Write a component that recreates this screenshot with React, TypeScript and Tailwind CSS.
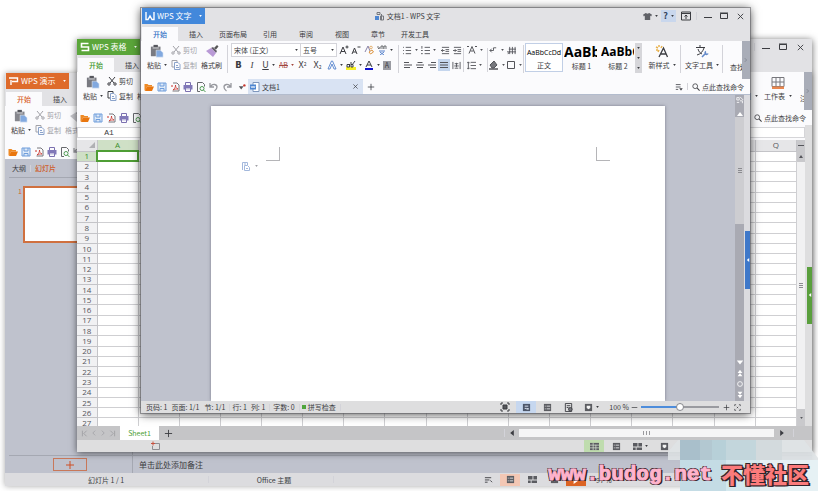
import type { ReactNode } from 'react';

const COLUMNS = 'ABCDEFGHIJKLMNOPQ'.split('');
const ROWS = Array.from({ length: 27 }, (_, i) => i + 1);
const TABS = ['插入', '页面布局', '引用', '审阅', '视图', '章节', '开发工具'];

type Box = { children: ReactNode; className?: string };

/* ---------- small shared pieces ---------- */

function Svg({ children, className = 'size-[10px]', box = 10 }: Box & { box?: number }) {
  return (
    <svg viewBox={`0 0 ${box} ${box}`} className={`${className} shrink-0`} fill="none" stroke="currentColor" strokeWidth="1" aria-hidden="true">
      {children}
    </svg>
  );
}

function Caret() {
  return (
    <svg viewBox="0 0 4 3" className="w-[3px] h-[2px] shrink-0" fill="currentColor" aria-hidden="true">
      <path d="M0 0h4L2 3z" />
    </svg>
  );
}

function Sep({ className = 'h-3' }: { className?: string }) {
  return <span className={`w-px shrink-0 bg-[#d3d3d9] ${className}`} />;
}

function Tool({ label, className = 'w-3', caret, children }: Box & { label: string; caret?: boolean }) {
  return (
    <button type="button" aria-label={label} className={`flex h-[12px] shrink-0 items-center justify-center gap-[3px] ${className}`}>
      {children}
      {caret && <Caret />}
    </button>
  );
}

/* ---------- icons ---------- */

const PasteIcon = ({ faded }: { faded?: boolean }) => (
  <Svg className="h-[14px] w-[16px]" box={16}>
    <path d="M1 3h11v11H1z" fill={faded ? '#85868d' : '#797a81'} stroke="none" />
    <path d="M4 1h5v3H4z" fill="#55565d" stroke="none" />
    <path d="M3 4.500h7" stroke="#e8e8ea" />
    <path d="M7 7h5l3 3v5H7z" fill="#82a9df" stroke="#f4f6fa" strokeWidth=".6" />
  </Svg>
);

const CutIcon = () => (
  <Svg>
    <path d="M2 1l5 6M8 1L3 7" />
    <circle cx="2" cy="8" r="1.2" />
    <circle cx="8" cy="8" r="1.2" />
  </Svg>
);

const CopyIcon = () => (
  <Svg>
    <path d="M6 2V.5H1V7h2" />
    <path d="M3.500 2.500h3.500l2 2v5H3.500zM5 5.500h2M5 7.500h3" stroke="#8ba3cb" />
  </Svg>
);

const BrushIcon = ({ faded }: { faded?: boolean }) => (
  <Svg className="size-[14px]" box={14}>
    <path d="M9 4l3-3 1.500 1.500L11 5.500z" fill={faded ? '#b5b5ba' : '#555'} stroke="none" />
    <path d="M6 4l2-1 4 4-1 2z" fill={faded ? '#a9a9ae' : '#66616d'} stroke="none" />
    <path d="M1 7l5-3 5 5-3 4z" fill={faded ? '#c3c3c8' : '#b99ad6'} stroke="none" />
  </Svg>
);

const FolderIcon = () => (
  <Svg>
    <path d="M.5 8.500V2h3l1 1h3.500v1.500H3L1.500 8.500z" fill="#ee8a24" stroke="none" />
    <path d="M3 4.500h7L8 9H1z" fill="#e9760f" stroke="none" />
  </Svg>
);

const SaveIcon = () => (
  <Svg>
    <path d="M1 1h8v8H1z" stroke="#6f9ddb" fill="#dfeaf8" />
    <path d="M3 1v3h4V1M3 9V6.500h4V9" stroke="#6f9ddb" />
  </Svg>
);

const PdfIcon = () => (
  <Svg>
    <path d="M3 1h4l2 2v6H2.500" stroke="#77777c" />
    <path d="M1 4h2" stroke="#c8342c" />
    <path d="M3 8c2-1.500 2.500-3.500 2.500-5 0 2 1 3.500 2.500 4-2 0-3.500 0-5 1z" stroke="#c8342c" strokeWidth=".8" />
  </Svg>
);

const PrintIcon = () => (
  <Svg>
    <path d="M2.500 3.500v-3h5v3M2.500 6.500v3h5v-3" stroke="#7b70b0" />
    <path d="M.5 3h9v4.500h-9z" fill="#8178b8" stroke="none" />
    <path d="M3 7h4" stroke="#fff" />
  </Svg>
);

const PreviewIcon = () => (
  <Svg>
    <path d="M4 9.500H1.500v-9h5l2 2v2" stroke="#67696d" />
    <circle cx="6" cy="6.500" r="2" stroke="#4f9a54" />
    <path d="M7.500 8l2 2" stroke="#4f9a54" />
  </Svg>
);

const UndoIcon = ({ flip }: { flip?: boolean }) => (
  <Svg>
    <path d={flip ? 'M9 1v4H5M8.500 4.500C6 1 2 2.500 2 5c0 2 1 3 2.500 4' : 'M1 1v4h4M1.500 4.500C4 1 8 2.500 8 5c0 2-1 3-2.500 4'} stroke="#97989e" strokeWidth="1.300" />
  </Svg>
);

const SearchIcon = () => (
  <Svg className="size-[8px]">
    <circle cx="4" cy="4" r="3" />
    <path d="M6.500 6.500L9.500 9.500" strokeWidth="1.300" />
  </Svg>
);

const Lines = ({ d, className }: { d: string; className?: string }) => (
  <Svg className={className}>
    <path d={d} />
  </Svg>
);

const PageViewIcon = () => (
  <Svg className="size-[9px]">
    <path d="M1 1h8v8H1z" fill="#5b5c61" stroke="none" />
    <path d="M3 3h4v2.500L5 7 3 5.500z" fill="#f2f2f2" stroke="none" />
  </Svg>
);

const PageIcon = () => (
  <Svg className="size-[9px]">
    <path d="M1 1h8v8H1z" fill="#4c566a" stroke="none" />
    <path d="M3 3.500h4M3 6h2" stroke="#e6eefa" />
    <path d="M5 6.500h2.500" stroke="#e6eefa" strokeWidth="1.500" />
  </Svg>
);

const OutlineIcon = () => (
  <Svg className="size-[9px]">
    <path d="M1 1h8v8H1z" fill="#5b5c61" stroke="none" />
    <path d="M2 3.500h1M4 3.500h4M2 6.500h1M4 6.500h4" stroke="#e2e2e4" />
  </Svg>
);

const GridIcon = () => (
  <Svg className="size-[9px]">
    <path d="M0 1h10v8H0z" fill="#5b5c61" stroke="none" />
    <path d="M0 3.500h10M0 6.500h10M3.500 1v8M6.500 3v6" stroke="#d8e4d2" strokeWidth=".8" />
  </Svg>
);

const ThumbsIcon = () => (
  <Svg className="size-[9px]">
    <path d="M0 1h5v4H0zM6 1h4v4H6zM0 6h3v3H0zM4 6h6v3H4z" fill="#5b5c61" stroke="none" />
  </Svg>
);

/* ---------- window parts ---------- */

function Brand({ name, className, children }: Box & { name: string }) {
  return (
    <button type="button" className={`flex h-4 w-[63px] shrink-0 items-center gap-[2px] pl-[3px] text-[8px] text-white ${className}`}>
      {children}
      <span className="grow text-left whitespace-nowrap">{name}</span>
      <span className="pr-[3px]"><Caret /></span>
    </button>
  );
}

function WindowButtons() {
  return (
    <>
      <Tool label="最小化"><Lines d="M1 6.500h8" /></Tool>
      <Tool label="最大化"><Lines d="M1.500 2.500h7v5h-7zM1 2h8" /></Tool>
      <Tool label="关闭"><Lines d="M2 2l6 6M8 2L2 8" className="size-[9px]" /></Tool>
    </>
  );
}

function RibbonTabs({ tabs, accent }: { tabs: string[]; accent: string }) {
  return (
    <nav className="flex h-[17px] shrink-0 items-end overflow-hidden pl-px">
      <button type="button" className={`h-[14px] w-9 shrink-0 bg-[#fbfbfd] font-medium ${accent}`}>开始</button>
      {tabs.map((tab) => (
        <button key={tab} type="button" className="h-[14px] min-w-9 shrink-0 px-[5px]">{tab}</button>
      ))}
    </nav>
  );
}

function Clipboard({ cutOff, brushOff }: { cutOff?: boolean; brushOff?: boolean }) {
  return (
    <div className="flex shrink-0 pl-[5px] pt-[3px]">
      <button type="button" className="flex w-[22px] flex-col items-center gap-px">
        <PasteIcon faded={brushOff} />
        <span className="flex items-center gap-[3px] whitespace-nowrap leading-[12px]">粘贴<Caret /></span>
      </button>
      <div className={`ml-[3px] flex w-7 flex-col gap-[3px] ${cutOff ? 'text-[#a2a2a8]' : ''}`}>
        <button type="button" className="flex h-[12px] items-center gap-[2px] whitespace-nowrap"><CutIcon />剪切</button>
        <button type="button" className="flex h-[12px] items-center gap-[2px] whitespace-nowrap"><CopyIcon />复制</button>
      </div>
      <button type="button" className={`flex w-[25px] flex-col items-center gap-px ${brushOff ? 'text-[#a2a2a8]' : ''}`}>
        <BrushIcon faded={brushOff} />
        <span className="whitespace-nowrap leading-[12px]">格式刷</span>
      </button>
    </div>
  );
}

function QuickAccess() {
  return (
    <div className="flex shrink-0 items-center gap-[3px] pl-[3px]">
      <button type="button" aria-label="打开"><FolderIcon /></button>
      <button type="button" aria-label="保存"><SaveIcon /></button>
      <button type="button" aria-label="输出为PDF"><PdfIcon /></button>
      <button type="button" aria-label="打印"><PrintIcon /></button>
      <button type="button" aria-label="打印预览"><PreviewIcon /></button>
      <button type="button" aria-label="撤销"><UndoIcon /></button>
      <button type="button" aria-label="恢复"><UndoIcon flip /></button>
    </div>
  );
}

function FindCommand() {
  return (
    <button type="button" className="flex items-center gap-[2px] whitespace-nowrap">
      <SearchIcon />
      点此查找命令
    </button>
  );
}

function RibbonScroll() {
  return (
    <button type="button" aria-label="更多" className="flex h-full w-2 shrink-0 items-center justify-center bg-[#a9adb8] text-[#6f737f]">
      <Lines d="M3 2l3 3-3 3" className="size-[6px]" />
    </button>
  );
}

/* ---------- presentation ---------- */

function PresentationWindow() {
  return (
    <section className="absolute top-[73px] right-[6px] bottom-[5px] left-[5px] flex flex-col overflow-hidden bg-[#e2e2e5] shadow-[0_0_6px_rgba(0,0,0,0.35)]">
      <header className="flex h-4 shrink-0 pl-px">
        <Brand name="WPS 演示" className="bg-[#de6b2b]">
          <Svg><path d="M0 2h8.500v3.500H3M2 4v5" strokeWidth="1.400" /></Svg>
        </Brand>
      </header>
      <RibbonTabs tabs={['插入']} accent="text-[#d9622b]" />
      <div className="flex h-[38px] shrink-0 bg-[#fbfbfd]"><Clipboard cutOff brushOff /></div>
      <div className="flex h-[15px] shrink-0 bg-[#fbfbfd]"><QuickAccess /></div>
      <div className="flex min-h-0 grow bg-[#bfc2cd]">
        <aside className="flex w-32 shrink-0 flex-col border-r border-[#a5a8b2] pl-1">
          <div className="flex h-[19px] shrink-0 items-center gap-1 border-b border-[#a5a8b2] pl-[3px]">
            <button type="button">大纲</button>
            <Sep className="h-[7px]" />
            <button type="button" className="font-medium text-[#cf5b28]">幻灯片</button>
          </div>
          <div className="flex grow items-start pt-2">
            <span className="w-[14px] pr-px text-right text-[#d9622b]">1</span>
            <div className="h-[57px] w-[100px] border-2 border-[#d0703f] bg-white" />
          </div>
          <div className="flex h-[18px] shrink-0 items-center border-t border-[#a5a8b2] pl-[44px]">
            <button type="button" aria-label="新建幻灯片" className="flex h-[13px] w-[34px] items-center justify-center border border-[#c8785a] text-[#cf4f25]">
              <Lines d="M5 1v8M1 5h8" />
            </button>
          </div>
        </aside>
        <div className="flex min-w-0 grow flex-col justify-end">
          <p className="flex h-[18px] items-center border-t border-[#a5a8b2] pl-[6px] text-[8px]">单击此处添加备注</p>
        </div>
      </div>
      <footer className="flex h-[13px] shrink-0 items-center bg-[#dcdcdf]">
        <span className="w-[203px] pl-[83px]">幻灯片 1 / 1</span>
        <Sep className="h-[7px]" />
        <span className="w-[124px] pl-[6px] text-center">Office 主题</span>
        <Sep className="h-[7px]" />
        <div className="ml-[144px] flex items-center gap-[2px]">
          <Tool label="备注" className="w-5"><Lines d="M1 3h7M1 5.500h5M1 8h3M7 6l2 2" className="size-[9px]" /></Tool>
          <Tool label="普通视图" className="w-5 bg-[#f3c7b4]"><OutlineIcon /></Tool>
          <Tool label="浏览视图" className="w-5"><ThumbsIcon /></Tool>
          <Tool label="阅读视图" className="w-5"><PageViewIcon /></Tool>
          <Tool label="放映" className="w-5 bg-[#dc6424] text-white">
            <Svg className="size-[8px]"><path d="M2 0l7 5-7 5z" fill="currentColor" stroke="none" /></Svg>
          </Tool>
          <span className="ml-2">97 %</span>
        </div>
      </footer>
    </section>
  );
}

/* ---------- spreadsheet ---------- */

function Sheet() {
  return (
    <table className="h-[289px] w-full table-fixed border-collapse bg-white text-center font-['Open_Sans','Noto_Sans_CJK_SC',sans-serif] text-[8px] leading-[8px] text-[#55565b]">
      <colgroup>
        <col className="w-5" />
        {COLUMNS.map((c) => <col key={c} />)}
      </colgroup>
      <thead>
        <tr className="h-[11px] bg-[#e6e6e8]">
          <td className="border-r border-b border-[#c4c4c8] p-0">
            <svg viewBox="0 0 6 6" className="mr-[2px] ml-auto size-[6px] fill-[#b0b0b4]" aria-hidden="true"><path d="M6 0v6H0z" /></svg>
          </td>
          {COLUMNS.map((c) => (
            <th key={c} scope="col" className={`border-r border-b border-[#c4c4c8] p-0 font-normal ${c === 'A' ? 'bg-[#cfe0c6] text-[#3c8f2c]' : ''}`}>{c}</th>
          ))}
        </tr>
      </thead>
      <tbody>
        {ROWS.map((row) => (
          <tr key={row}>
            <th scope="row" className={`border-r border-b border-[#c4c4c8] p-0 font-normal ${row === 1 ? 'bg-[#cfe0c6] text-[#3c8f2c]' : 'bg-[#f1f1f3]'}`}>{row}</th>
            {COLUMNS.map((c) => (
              <td key={c} className={`border-r border-b border-[#cfcfd2] p-0 ${row === 1 && c === 'A' ? 'outline-2 -outline-offset-1 outline-[#4f9e35]' : ''}`} />
            ))}
          </tr>
        ))}
      </tbody>
    </table>
  );
}

function SpreadsheetWindow() {
  return (
    <section className="absolute top-[39px] right-[6px] bottom-[39px] left-[77px] flex flex-col overflow-hidden bg-[#e2e2e5] shadow-[0_1px_7px_rgba(0,0,0,0.6)]">
      <header className="flex h-4 shrink-0 items-center justify-between">
        <Brand name="WPS 表格" className="bg-[#5ba63a]">
          <Svg><path d="M8.500 1.500h-7V5h7v3.500h-7" strokeWidth="1.600" /></Svg>
        </Brand>
        <div className="flex items-center gap-[5px] pr-[6px]"><Sep className="h-2" /><WindowButtons /></div>
      </header>
      <RibbonTabs tabs={['插入']} accent="text-[#3f972b]" />
      <div className="flex h-[38px] shrink-0 justify-between bg-[#fbfbfd]">
        <Clipboard />
        <div className="flex">
          <div className="flex flex-col items-center pt-1 pr-[6px]">
            <Svg className="size-[14px]" box={14}><path d="M1 1h12v12H1z" fill="#5a9a48" stroke="none" /><path d="M1 5h12M1 9h12" stroke="#dcebd5" /></Svg>
            <span className="flex items-center gap-1 whitespace-nowrap leading-[12px]">行和列<Caret /></span>
          </div>
          <div className="flex flex-col items-center pt-1 pr-2">
            <Svg className="size-[14px]" box={14}>
              <path d="M1 1.500h12v9H1zM1 6h12M5 1.500v9M9 1.500v9" stroke="#77777c" />
              <path d="M1 10.500h12v2.500H1z" fill="#e8874f" stroke="none" />
            </Svg>
            <span className="flex items-center gap-1 whitespace-nowrap leading-[12px]">工作表<Caret /></span>
          </div>
          <div className="flex w-1 items-end overflow-hidden pb-[7px] whitespace-nowrap">注</div>
          <RibbonScroll />
        </div>
      </div>
      <div className="flex h-[15px] shrink-0 justify-between bg-[#fbfbfd] pr-[6px]"><QuickAccess /><FindCommand /></div>
      <div className="flex h-[15px] shrink-0 border-r-[7px] border-[#dededf] bg-[#fbfbfd] py-[2px]">
        <input aria-label="名称框" defaultValue="A1" className="w-16 border border-[#d5d5d8] bg-white text-center font-['Liberation_Mono',monospace] text-[8px]" />
        <input aria-label="编辑栏" className="min-w-0 grow border border-[#d5d5d8] bg-white" />
      </div>
      <div className="flex min-h-0 grow">
        <div className="min-w-0 grow overflow-hidden"><Sheet /></div>
        <div className="flex w-2 shrink-0 flex-col items-center bg-[#f1f1f2] text-[#55565b]">
          <div className="flex h-[22px] w-full shrink-0 flex-col items-center justify-around bg-[#c9c9cc]">
            <span className="h-px w-[6px] bg-[#55565b]" />
            <svg viewBox="0 0 4 3" className="h-[3px] w-1 fill-current" aria-hidden="true"><path d="M0 3h4L2 0z" /></svg>
          </div>
          <div className="flex grow flex-col justify-center gap-px">
            <span className="h-px w-1 bg-[#8b8b90]" /><span className="h-px w-1 bg-[#8b8b90]" /><span className="h-px w-1 bg-[#8b8b90]" />
          </div>
          <div className="flex h-[17px] w-full shrink-0 items-center justify-center bg-[#c9c9cc]"><Caret /></div>
        </div>
        <div className="flex w-[7px] shrink-0 items-center justify-end bg-[#dededf]">
          <button type="button" aria-label="任务窗格" className="mt-6 flex h-[57px] w-[5px] items-center justify-center bg-[#5a9f3d] text-white">
            <Svg className="size-1"><path d="M8 0v10L2 5z" fill="currentColor" stroke="none" /></Svg>
          </button>
        </div>
      </div>
      <div className="flex h-[14px] shrink-0 items-center bg-[#c5c5c7] pr-[6px]">
        <div className="flex w-[43px] shrink-0 items-center gap-[3px] pl-1 text-[#96969b]">
          <Lines d="M2 1v8M8 1L4 5l4 4" className="size-[7px]" />
          <Lines d="M7 1L3 5l4 4" className="size-[6px]" />
          <Lines d="M3 1l4 4-4 4" className="size-[6px]" />
          <Lines d="M2 1l4 4-4 4M8 1v8" className="size-[7px]" />
        </div>
        <button type="button" className="h-full w-[39px] shrink-0 bg-white text-[#4da034]">Sheet1</button>
        <Tool label="新建工作表" className="w-[18px]"><Lines d="M5 1v8M1 5h8" className="size-[9px]" /></Tool>
        <div className="ml-auto flex w-[46%] items-center gap-1">
          <div className="grow" />
          <Sep className="h-2 bg-[#88888c]" />
          <Svg className="size-[6px]"><path d="M8 0v10L2 5z" fill="currentColor" stroke="none" /></Svg>
          <div className="flex h-2 w-[255px] items-center justify-center gap-[2px] bg-[#f5f5f6]">
            <span className="h-1 w-px bg-[#99999d]" /><span className="h-1 w-px bg-[#99999d]" /><span className="h-1 w-px bg-[#99999d]" />
          </div>
          <Svg className="ml-px size-[6px]"><path d="M2 0v10l6-5z" fill="currentColor" stroke="none" /></Svg>
          <Sep className="mr-3 ml-1 h-2" />
        </div>
      </div>
      <footer className="flex h-3 shrink-0 items-center justify-between bg-[#dededf] pr-[138px] pl-[74px]">
        <Svg><path d="M2.500 2.500h6v6h-7V5" stroke="#8d8d92" /><path d="M0 2.500h4M2 .5v4" stroke="#c8503f" /></Svg>
        <div className="flex items-center gap-px">
          <Tool label="普通" className="w-5 bg-[#bfdcae]"><GridIcon /></Tool>
          <Tool label="分页" className="w-[22px]"><OutlineIcon /></Tool>
          <Tool label="阅读" className="w-[25px]" caret><ThumbsIcon /></Tool>
          <Tool label="全屏" className="w-5"><PageViewIcon /></Tool>
        </div>
      </footer>
    </section>
  );
}

/* ---------- text document ---------- */

function FontGroup() {
  return (
    <div className="flex w-[164px] shrink-0 flex-col gap-[2px] pt-[2px]">
      <div className="flex h-[14px] items-center">
        <button type="button" className="flex h-[14px] w-[70px] items-center justify-between border border-[#d4d4da] bg-white px-[2px] text-[7px]">宋体 (正文)<Caret /></button>
        <button type="button" className="-ml-px mr-[1px] flex h-[14px] w-[37px] items-center justify-between border border-[#d4d4da] bg-white px-[2px] text-[7px]">五号<Caret /></button>
        <Tool label="增大字号"><Lines d="M1 9l3-7 3 7M2 6.500h4M6.500 2h3M8 .5v3" /></Tool>
        <Tool label="减小字号"><Lines d="M1 9l2.500-6L6 9M2 7h3M6.500 2h3" /></Tool>
        <Tool label="清除格式" className="w-[14px]">
          <Svg><path d="M1 7l3-6 2 5" stroke="#8a83a8" /><path d="M5 7l3-2 1.500 2-3 2z" stroke="#dc9440" /><circle cx="7" cy="2.500" r="1.300" stroke="#e3b272" /></Svg>
        </Tool>
        <Tool label="拼音指南" className="w-[18px]" caret>
          <Svg><path d="M1 1v2l1 1 1-2M4 4V1h2v3M7 4V1h2v3" strokeWidth=".7" /><path d="M2 6h6M3 7l4 3M7 7l-4 3" stroke="#5a84cc" /></Svg>
        </Tool>
      </div>
      <div className="flex items-center pl-px text-[9px]">
        <Tool label="加粗" className="w-[13px] font-bold"><b>B</b></Tool>
        <Tool label="倾斜" className="w-[14px] font-['Liberation_Serif',serif]"><i>I</i></Tool>
        <Tool label="下划线" className="w-[19px]" caret><u>U</u></Tool>
        <Tool label="删除线" className="w-[17px] text-[#a3463d]" caret><s className="text-[7px]">AB</s></Tool>
        <Tool label="上标" className="w-[15px]"><span>X<sup className="text-[5px]">2</sup></span></Tool>
        <Tool label="下标" className="w-[15px]"><span>X<sub className="text-[5px]">2</sub></span></Tool>
        <Tool label="文字效果" className="w-5" caret>
          <Svg><path d="M1 9l3.500-8h1L9 9H7L5 4 3 9z" stroke="#5583cd" strokeWidth=".9" /></Svg>
        </Tool>
        <Tool label="突出显示" className="w-[18px]" caret>
          <Svg><path d="M0 7h10v3H0z" fill="#f5ee24" stroke="none" /><path d="M3 4.500H1V7h2.500V4M5 2v5h2V4.500H5M6 5l3-4" /></Svg>
        </Tool>
        <Tool label="字体颜色" className="w-[17px]" caret>
          <Svg><path d="M1 8h8v2H1z" fill="#1010d0" stroke="none" /><path d="M2 7l3-6 3 6M3 5h4" /></Svg>
        </Tool>
        <Tool label="字符底纹" className="w-[14px]"><span className="bg-[#9a9ba2] px-[2px] text-[7px] leading-[9px]">A</span></Tool>
      </div>
    </div>
  );
}

function ParagraphGroup() {
  return (
    <div className="flex shrink-0 pt-[3px] text-[#54555a]">
      <div className="flex w-[61px] flex-col gap-[3px]">
        <div className="flex">
          <Tool label="项目符号" className="w-[17px]" caret><Lines d="M0 1.500h1M0 5h1M0 8.500h1M3 1.500h6M3 5h6M3 8.500h6" className="size-[9px]" /></Tool>
          <Tool label="编号" className="w-[18px]" caret><Lines d="M1 0v3M0 5h2M0 8.500h2M4 1.500h6M4 5h6M4 8.500h6" className="size-[9px]" /></Tool>
          <Tool label="减少缩进" className="ml-[2px] w-3"><Lines d="M1 1.500h8M5 4h4M5 6h4M1 8.500h8M0 5h4M2 3.500L.5 5 2 6.500" className="size-[9px]" /></Tool>
          <Tool label="增加缩进"><Lines d="M1 1.500h8M5 4h4M5 6h4M1 8.500h8M0 5h4M2 3.500L3.500 5 2 6.500" className="size-[9px]" /></Tool>
        </div>
        <div className="flex">
          <Tool label="左对齐"><Lines d="M1 2.500h5M1 5h8M1 7.500h6" /></Tool>
          <Tool label="居中"><Lines d="M2.500 2.500h5M1 5h8M2 7.500h6" /></Tool>
          <Tool label="右对齐"><Lines d="M4 2.500h5M1 5h8M3 7.500h6" /></Tool>
          <Tool label="两端对齐" className="w-3 bg-[#c5d6ee]"><Lines d="M1 2.500h8M1 5h8M1 7.500h8" /></Tool>
          <Tool label="分散对齐"><Lines d="M1 1v8M9 1v8M3 3h4M2.500 5.500h5M3 8h4M5 2v5" className="size-[9px]" /></Tool>
        </div>
      </div>
      <Sep className="mt-1 h-6" />
      <div className="flex w-[23px] flex-col gap-[3px]">
        <Tool label="字符缩放" className="w-[21px]" caret><Lines d="M2 8.500l3-7 3 7M3.500 6h3M0 1.500h2M8 1.500h2" /></Tool>
        <Tool label="行距" className="w-[21px]" caret><Lines d="M1.500 1v8M0 2.500L1.500 1 3 2.500M0 7.500L1.500 9 3 7.500M4 1.500h6M4 5h6M4 8.500h6" className="size-[9px]" /></Tool>
      </div>
      <Sep className="mt-1 h-6" />
      <div className="flex flex-col gap-[3px]">
        <div className="flex">
          <Tool label="显示标记" className="w-[17px]" caret><Lines d="M3 7l-2-2 2-2M1 5h4V2h3" className="size-[9px]" /></Tool>
          <Tool label="制表位"><Lines d="M3 1v8M6 1v8M9 1v8M2 3.500h8M0 6.500h10M1 9l2-3" className="size-[9px]" /></Tool>
        </div>
        <div className="flex">
          <Tool label="底纹" className="w-[17px]" caret>
            <Svg><path d="M1 5l4-4 3 4-3 3H3z" fill="#77787e" /><path d="M0 9h9" strokeWidth="1.500" /></Svg>
          </Tool>
          <Tool label="边框" className="w-[18px]" caret><Lines d="M1.500 1.500h7v7h-7z" /></Tool>
        </div>
      </div>
    </div>
  );
}

function StylesGroup() {
  return (
    <div className="flex shrink-0 pt-[2px]">
      <button type="button" className="flex h-[29px] w-[38px] flex-col items-center justify-end overflow-hidden border border-[#c1cfe6] bg-white">
        <span className="font-['Open_Sans',sans-serif] text-[7px] leading-[14px] text-black">AaBbCcDd</span>
        <span className="leading-[11px]">正文</span>
      </button>
      <button type="button" className="ml-px flex h-[29px] w-[35px] flex-col overflow-hidden">
        <b className="block w-[33px] overflow-hidden text-left font-['Open_Sans',sans-serif] text-[14px] leading-[18px] text-black">AaBb</b>
        <span className="w-full leading-[11px]">标题 1</span>
      </button>
      <button type="button" className="ml-[2px] flex h-[29px] w-[34px] flex-col overflow-hidden">
        <b className="block w-[33px] overflow-hidden text-left font-['Open_Sans',sans-serif] text-[12px] leading-[18px] text-black">AaBbC</b>
        <span className="w-full leading-[11px]">标题 2</span>
      </button>
      <div className="flex h-[30px] w-[7px] flex-col items-center justify-around bg-[#d6d6da]">
        <Caret /><Caret /><Caret />
      </div>
    </div>
  );
}

function BigTool({ label, className, caret, children }: Box & { label: string; caret?: boolean }) {
  return (
    <button type="button" className={`flex shrink-0 flex-col items-center gap-px overflow-hidden pt-[3px] whitespace-nowrap ${className}`}>
      {children}
      <span className="flex items-center gap-[3px] leading-[12px]">{label}{caret && <Caret />}</span>
    </button>
  );
}

function WriterRibbon() {
  return (
    <div className="flex h-[38px] shrink-0 bg-[#fbfbfd]">
      <Clipboard cutOff />
      <Sep className="mx-[3px] mt-1 h-7" />
      <FontGroup />
      <Sep className="mx-[3px] mt-1 h-7" />
      <ParagraphGroup />
      <Sep className="mr-px mt-1 h-7" />
      <StylesGroup />
      <BigTool label="新样式" className="ml-1 w-[32px]" caret>
        <Svg className="size-[14px]" box={14}>
          <path d="M1 3l2 1M4 1v2M7 2L6 4M1 6h2M3 8l1-2" stroke="#e9b24d" strokeWidth="1.500" />
          <path d="M4 13l4.500-9 4 9M6 10h5" strokeWidth="1.300" />
        </Svg>
      </BigTool>
      <Sep className="mx-[2px] mt-1 h-7" />
      <BigTool label="文字工具" className="w-[38px]" caret>
        <Svg className="size-[14px]" box={14}>
          <path d="M5 1v2M1 3.500h9M2 11c4-1 6-4 7-7M3 5c1 3 2 4 4 5" />
          <path d="M7 13l4-4M11 7.500a1.500 1.500 0 1 0 2 2" stroke="#6389c9" strokeWidth="1.600" />
        </Svg>
      </BigTool>
      <Sep className="mx-[1px] mt-1 h-7" />
      <div className="flex min-w-0 grow items-end overflow-hidden pb-[7px] pl-[6px] whitespace-nowrap">查找</div>
      <RibbonScroll />
    </div>
  );
}

function WriterStatus() {
  return (
    <footer className="flex h-3 shrink-0 items-center justify-between bg-[#dededf] whitespace-nowrap">
      <div className="flex items-center gap-1 pl-[5px]">
        <span>页码: 1</span>
        <span>页面: 1/1</span>
        <span className="pl-px">节: 1/1</span>
        <span className="flex items-center gap-[2px]"><Sep className="h-[7px]" />行: 1</span>
        <span>列: 1</span>
        <span className="flex items-center gap-[3px]"><Sep className="h-[7px]" />字数: 0</span>
        <span className="flex items-center gap-[2px]"><Sep className="h-[7px]" /><i className="size-1 bg-[#4ea53c]" />拼写检查</span>
        <Sep className="h-[7px]" />
      </div>
      <div className="flex items-center pr-[7px]">
        <Tool label="全屏显示" className="w-[22px]">
          <Svg><path d="M3 3h4v4H3z" fill="#55565b" /><path d="M1 3V1h2M7 1h2v2M9 7v2H7M3 9H1V7" /></Svg>
        </Tool>
        <Tool label="页面视图" className="w-5 bg-[#c6d7ef]"><PageIcon /></Tool>
        <Tool label="大纲视图" className="w-[22px]"><OutlineIcon /></Tool>
        <Tool label="Web版式" className="w-5">
          <Svg className="size-[9px]"><path d="M1.500.5h7v9h-7zM3 3h4M3 5h2" /><circle cx="7" cy="7" r="2" fill="#77787e" /></Svg>
        </Tool>
        <Tool label="护眼模式" className="w-[26px]" caret><PageViewIcon /></Tool>
        <span className="w-[25px] text-right">100 %</span>
        <Tool label="缩小" className="w-[10px]"><Lines d="M1 5h8" className="size-[7px]" /></Tool>
        <input
          type="range"
          aria-label="显示比例"
          defaultValue={50}
          className="mx-[2px] h-2 w-[78px] appearance-none bg-[linear-gradient(90deg,#4e8ddb_50%,#9a9ba0_50%)] bg-[length:100%_2px] bg-center bg-no-repeat [&::-webkit-slider-thumb]:size-2 [&::-webkit-slider-thumb]:appearance-none [&::-webkit-slider-thumb]:rounded-full [&::-webkit-slider-thumb]:border [&::-webkit-slider-thumb]:border-[#85868b] [&::-webkit-slider-thumb]:bg-white"
        />
        <Tool label="放大" className="w-[10px]"><Lines d="M5 1v8M1 5h8" className="size-[7px]" /></Tool>
        <Tool label="适应窗口" className="w-3"><Lines d="M1 3V1h2M7 1h2v2M9 7v2H7M3 9H1V7M4 4l2 2M6 4L4 6" className="size-[7px]" /></Tool>
      </div>
    </footer>
  );
}

function DocumentArea() {
  return (
    <div className="flex min-h-0 grow border-t border-[#b3bccd] bg-[#bfc2cd]">
      <div className="flex min-w-0 grow justify-center pt-[11px] pl-[1px]">
        <div className="mr-[1px] w-[454px] bg-white shadow-[0_0_3px_rgba(90,90,110,0.7)]">
          <div className="flex justify-between px-[55px] pt-[41px]">
            <span className="size-[14px] border-r border-b border-[#b5b5b8]" />
            <span className="size-[14px] border-b border-l border-[#b5b5b8]" />
          </div>
          <button type="button" aria-label="粘贴选项" className="ml-[30px] flex items-center gap-1 text-[#a3b8dc]">
            <Svg><path d="M1.500 9V1.500h5V4M3.500 9.500v-5h3l2 2v3zM3 3h2M5 7.500h2" /></Svg>
            <span className="text-[#a0a0a5]"><Caret /></span>
          </button>
        </div>
      </div>
      <div className="flex w-[9px] shrink-0 flex-col items-center bg-[#a9aab3] text-white">
        <div className="flex h-[22px] flex-col items-center justify-between py-px">
          <Lines d="M1 2h3v3H1zM5 1l4 4M5 6h3v3M1 8h3" className="size-[8px]" />
          <svg viewBox="0 0 6 4" className="h-1 w-[6px] fill-current" aria-hidden="true"><path d="M0 4h6L3 0z" /></svg>
        </div>
        <div className="flex h-[107px] w-full flex-col items-center justify-center gap-px bg-[#cdcdd1]">
          <span className="h-px w-1 bg-[#8b8b90]" /><span className="h-px w-1 bg-[#8b8b90]" /><span className="h-px w-1 bg-[#8b8b90]" />
        </div>
        <div className="mt-auto flex flex-col items-center gap-[3px] pb-[2px]">
          <Svg className="size-[8px]"><path d="M1 3h8L5 8z" fill="currentColor" stroke="none" /></Svg>
          <Svg className="size-[8px]"><path d="M2 5l3-4 3 4zM2 9l3-4 3 4z" fill="currentColor" stroke="none" /></Svg>
          <Svg className="size-[8px]"><circle cx="5" cy="5" r="3" /></Svg>
          <Svg className="size-[8px]"><path d="M2 1l3 4 3-4zM2 5l3 4 3-4z" fill="currentColor" stroke="none" /></Svg>
        </div>
      </div>
      <div className="flex w-[6px] shrink-0 items-center justify-end bg-[#dbdbdf]">
        <button type="button" aria-label="任务窗格" className="mt-6 flex h-[58px] w-[5px] items-center justify-center bg-[#3f78c9] text-white">
          <Svg className="size-1"><path d="M8 0v10L2 5z" fill="currentColor" stroke="none" /></Svg>
        </button>
      </div>
    </div>
  );
}

function WriterWindow() {
  return (
    <section className="absolute top-[8px] right-[68px] bottom-[78px] left-[141px] flex flex-col overflow-hidden bg-[#e2e2e5] shadow-[0_0_0_1px_rgba(100,100,105,0.6),0_1px_9px_rgba(0,0,0,0.75)]">
      <header className="flex h-4 shrink-0 items-center pl-px">
        <Brand name="WPS 文字" className="bg-[#4288db]">
          <Svg><path d="M1 1v7.500h2L5 5l2 3.500h2V1" strokeWidth="1.400" /></Svg>
        </Brand>
        <h1 className="flex grow items-center justify-center gap-[3px] pr-[34px]">
          <Svg><path d="M1 5h4v4H1z" fill="#4e86d1" stroke="none" /><path d="M3 1.500h3v2H3zM7.500 3v6M6.500 5h3v4h-3z" stroke="#77787e" /></Svg>
          文档1 - WPS 文字
        </h1>
        <div className="flex items-center gap-1 pr-[4px]">
          <Tool label="皮肤" className="w-[14px]" caret>
            <Svg className="size-[9px]"><path d="M3 1L0 3l1 2 1-1v5h6V4l1 1 1-2-3-2-2 1z" fill="#606167" stroke="none" /></Svg>
          </Tool>
          <Tool label="帮助" className="w-[15px] bg-[#c9d7ed]" caret><b className="text-[9px] text-[#34435e]">?</b></Tool>
          <Tool label="功能区"><Lines d="M.5 1h9v8h-9zM.5 2.500h9M5 8V4M3.500 5.500L5 4l1.500 1.500" /></Tool>
          <Sep className="mr-px h-2" />
          <WindowButtons />
        </div>
      </header>
      <RibbonTabs tabs={TABS} accent="text-[#2f6fc4]" />
      <WriterRibbon />
      <div className="flex h-[15px] shrink-0 items-center bg-[#fbfbfd]">
        <QuickAccess />
        <Tool label="自定义" className="w-4 pl-1">
          <Svg className="size-[8px]"><path d="M1 4h6L4 8z" fill="#55565b" stroke="none" /><circle cx="8" cy="3" r="1.500" fill="#c8342c" stroke="none" /></Svg>
        </Tool>
        <div className="flex h-full w-[115px] items-center gap-[2px] bg-[#d9e3f3] pr-1 pl-[2px]">
          <Svg><path d="M3 .5h6v9H3z" fill="#fff" stroke="#7f97bd" /><path d="M0 2.500h6v5H0z" fill="#4e86d1" stroke="none" /><path d="M1 4l1 2 1-2 1 2 1-2" stroke="#fff" strokeWidth=".7" /></Svg>
          <span className="grow">文档1</span>
          <button type="button" aria-label="关闭文档"><Lines d="M2 2l6 6M8 2L2 8" className="size-[7px]" /></button>
        </div>
        <Tool label="新建" className="w-4"><Lines d="M5 1v8M1 5h8" className="size-[8px]" /></Tool>
        <div className="ml-auto flex items-center gap-[4px] pr-[6px]">
          <Lines d="M1 2h6M1 5h6M1 8h3M6 7h3L7.500 9z" className="size-[8px]" />
          <Sep className="h-[7px]" />
          <FindCommand />
        </div>
      </div>
      <DocumentArea />
      <WriterStatus />
    </section>
  );
}

/* ---------- site mark over the corner ---------- */

function SiteMark() {
  return (
    <div className="pointer-events-none absolute right-0 bottom-0 flex h-[51px] w-[275px] items-end justify-end">
      <svg viewBox="0 0 150 51" className="h-[51px] w-[150px]" aria-hidden="true">
        <path d="M0 12L10 0h126l14 18v33H12V20H0z" fill="#dfe3e6" opacity=".9" />
        <path d="M12 0h20v20H12z" fill="#a9bfcb" />
        <path d="M32 0h12v20H32z" fill="#b3c8d1" />
        <path d="M44 0h14v20H44z" fill="#b7d0d8" />
        <path d="M58 0h30v20H58z" fill="#c3d6dc" />
        <path d="M88 0h26v20H88z" fill="#d3dadd" />
        <path d="M12 20h46v31H12z" fill="#c4dce5" />
        <path d="M58 20h34v31H58z" fill="#d4e8ee" />
        <path d="M92 20h58v31H92z" fill="#e6f1f4" />
      </svg>
      <div className="absolute right-[9px] bottom-[5px] flex items-start gap-[9px] font-bold whitespace-nowrap [text-shadow:1px_1px_0_#33242a,-1px_-1px_0_#33242a,1px_-1px_0_#33242a,-1px_1px_0_#33242a,2px_1px_0_#33242a]">
        <span className="pt-[2px] font-['Liberation_Mono',monospace] text-[21px] leading-[22px] text-[#ffb3cc] [-webkit-text-stroke:1px_#ffb3cc]">www.budog.net</span>
        <span className="text-[22px] leading-[22px] font-black text-[#fb7b7b]">不懂社区</span>
      </div>
    </div>
  );
}

export default function App() {
  return (
    <main className="relative h-screen min-h-[400px] overflow-hidden bg-white font-['Noto_Sans_CJK_SC','Noto_Sans',sans-serif] text-[7px] leading-[10px] text-[#3b3c41]">
      <PresentationWindow />
      <SpreadsheetWindow />
      <WriterWindow />
      <SiteMark />
    </main>
  );
}
